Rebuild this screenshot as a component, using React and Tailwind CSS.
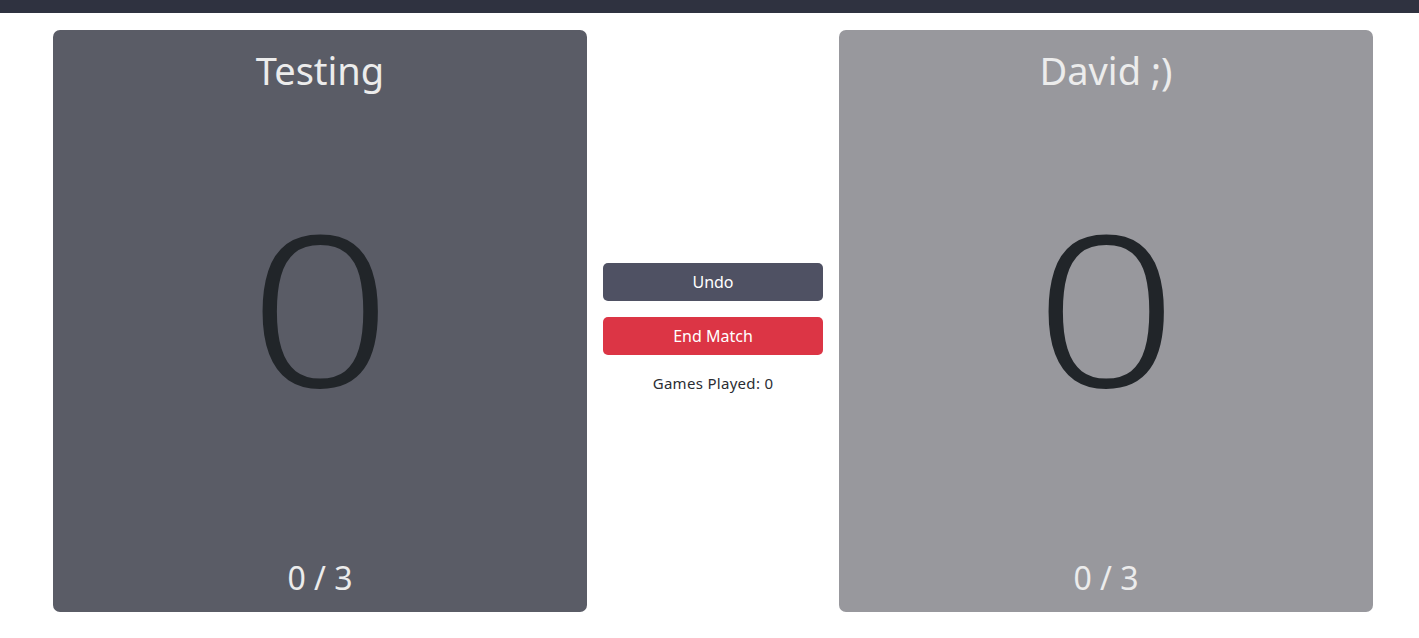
export default function App() {
  const font = { fontFamily: '"Noto Sans", "Open Sans", sans-serif' };
  const Card = ({ name, bg }) => (
    <div className={`flex h-[582px] w-[534px] flex-col items-center rounded-[7px] pt-[17px] pb-[14px] ${bg}`}>
      <div className="text-[38px] leading-[46px] text-[#ececec]">{name}</div>
      <div className="flex flex-1 items-center pb-[40px]">
        <span className="inline-block scale-x-[1.19] text-[211px] font-light leading-none text-[#212529]">0</span>
      </div>
      <div className="text-[32px] leading-[40px] text-[#ececec]">0 / 3</div>
    </div>
  );
  return (
    <div className="min-h-[638px] bg-white" style={font}>
      <div className="h-[13px] bg-[#2f3240]" />
      <div className="ml-[53px] mt-[17px] flex w-[1320px]">
        <Card name="Testing" bg="bg-[#5a5c66]" />
        <div className="flex w-[252px] flex-col items-center justify-center px-4 pt-[16px]">
          <button className="h-[38px] w-full rounded-[5px] bg-[#4f5163] text-[16px] text-white">Undo</button>
          <button className="mt-4 h-[38px] w-full rounded-[5px] bg-[#dc3545] text-[16px] text-white">End Match</button>
          <div className="mt-[16px] text-[15px] leading-[24px] tracking-[0.3px] text-[#2b2d33]">Games Played: 0</div>
        </div>
        <Card name="David ;)" bg="bg-[#98989d]" />
      </div>
    </div>
  );
}
